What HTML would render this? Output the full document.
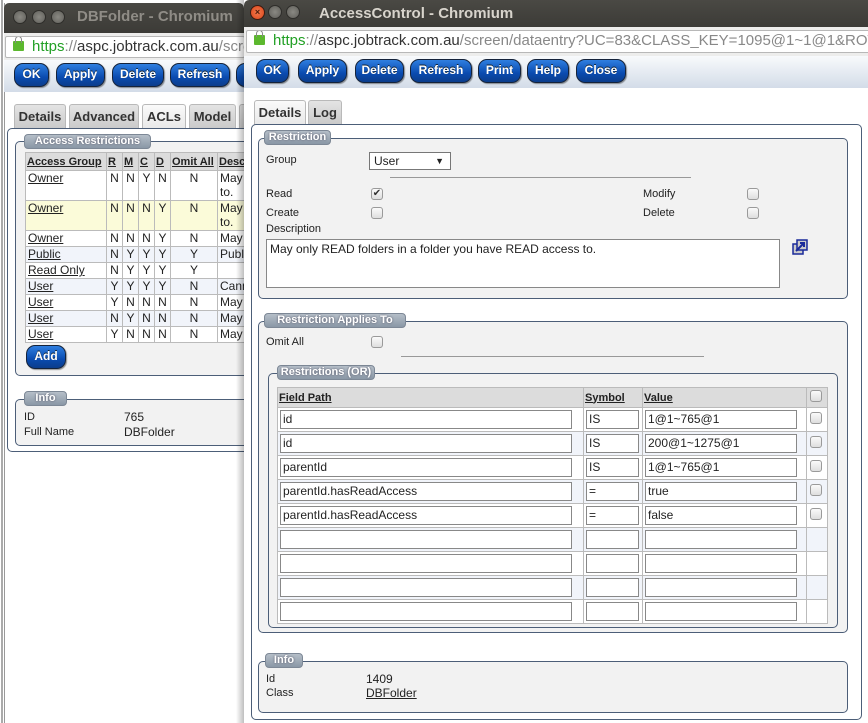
<!DOCTYPE html>
<html><head><meta charset="utf-8"><style>
*{box-sizing:border-box;margin:0;padding:0}
body{width:868px;height:723px;overflow:hidden;background:#fff;font-family:"Liberation Sans",sans-serif;position:relative;color:#222}
.a{position:absolute}
.tb{background:linear-gradient(#4a4944,#3c3b37);}
.ttl{color:#d8d4cc;font-weight:bold;font-size:15px;font-family:"Liberation Sans",sans-serif;}
.wb{width:14px;height:14px;border-radius:50%;background:radial-gradient(#8a8983,#5f5e59);border:1px solid #2e2d2a}
.url{background:#fff;border:1px solid #b8b8b8;border-radius:2px;font-size:15px;font-family:"Liberation Sans",sans-serif;color:#888;white-space:nowrap;overflow:hidden;padding-left:26px;line-height:20px}
.url b{font-weight:normal;color:#22a025}.url i{font-style:normal;color:#333}
.lock{position:absolute;left:7px;top:4px;width:11px;height:10px;background:#5cb82e;border-radius:1px}
.lock:before{content:"";position:absolute;left:2px;top:-5px;width:5px;height:6px;border:1.5px solid #888;border-bottom:none;border-radius:4px 4px 0 0}
.tool{background:linear-gradient(#f8fafc,#d3dce8)}
.btn{position:absolute;height:24px;border-radius:9px;background:linear-gradient(#2f7fe0,#0a4bb0 60%,#0b3d8c);border:1.5px solid #15233a;color:#fff;font-weight:bold;font-size:12px;text-align:center;line-height:21px;box-shadow:1px 1px 1px rgba(0,0,0,.4);text-shadow:0 -1px 0 #123}
.tab{position:absolute;height:25px;border:1px solid #b9b9b9;border-bottom:none;border-radius:3px 3px 0 0;background:linear-gradient(#e4e4e4,#c9c9c9);font-weight:bold;font-size:13px;color:#333;text-align:center;line-height:24px}
.tab.on{background:linear-gradient(#fafafa,#e8e8e8)}
.fs{position:absolute;border:1px solid #4c5e78;border-radius:5px;background:#f2f2f2}
.lg{position:absolute;height:15px;border-radius:4px;background:linear-gradient(#b5bec8,#8a97a6);border:1px solid #7d8896;color:#fff;font-weight:bold;font-size:11px;text-align:center;line-height:13px;text-shadow:0 0 2px #556}
.l{position:absolute;font-size:11px;color:#222}
.cb{position:absolute;width:12px;height:12px;border:1px solid #9a9a9a;border-radius:3px;background:linear-gradient(#fafafa,#dedede)}
table{border-collapse:collapse;position:absolute;font-size:12px}
td,th{border:1px solid #bbb}
th{background:#dcdcdc;text-align:left;font-size:11px;text-decoration:underline;padding:0 1px}
.lt td{padding:0 2px;vertical-align:top;height:16px;line-height:14px}
.lt td.c{text-align:center}
.u{text-decoration:underline}
.inp{position:absolute;height:19px;border:1px solid #888;background:#fff;font-size:12px;padding-left:2px;line-height:17px}
</style></head><body>

<div class="a" style="left:1px;top:0;width:2px;height:723px;background:#aaa"></div>

<!-- LEFT WINDOW -->
<div class="a" style="left:4px;top:3px;width:240px;height:720px;background:#fff;border-left:1px solid #999"></div>
<div class="a tb" style="left:4px;top:3px;width:240px;height:30px;border-radius:5px 5px 0 0"></div>
<div class="a wb" style="left:13px;top:10px"></div>
<div class="a wb" style="left:32px;top:10px"></div>
<div class="a wb" style="left:51px;top:10px"></div>
<div class="a ttl" style="left:77px;top:8px;color:#8f8c86">DBFolder - Chromium</div>
<div class="a" style="left:4px;top:33px;width:240px;height:27px;background:#ededec"></div>
<div class="a url" style="left:5px;top:36px;width:240px;height:22px"><span class="lock"></span><b>https</b>://<i>aspc.jobtrack.com.au</i>/screen</div>
<div class="a tool" style="left:4px;top:60px;width:240px;height:32px"></div>
<div class="btn" style="left:14px;top:63px;width:35px">OK</div>
<div class="btn" style="left:56px;top:63px;width:49px">Apply</div>
<div class="btn" style="left:112px;top:63px;width:52px">Delete</div>
<div class="btn" style="left:170px;top:63px;width:60px">Refresh</div>
<div class="btn" style="left:236px;top:63px;width:30px"></div>
<div class="tab" style="left:14px;top:104px;width:52px">Details</div>
<div class="tab" style="left:69px;top:104px;width:70px">Advanced</div>
<div class="tab on" style="left:142px;top:104px;width:44px">ACLs</div>
<div class="tab" style="left:189px;top:104px;width:47px">Model</div>
<div class="tab" style="left:239px;top:104px;width:20px"></div>
<div class="fs" style="left:7px;top:128px;width:250px;height:324px;background:#fff"></div>
<div class="fs" style="left:15px;top:141px;width:240px;height:235px"></div>
<div class="lg" style="left:24px;top:134px;width:127px">Access Restrictions</div>
<table class="lt" style="left:25px;top:152px;width:235px;background:#fff">
<tr><th style="width:81px;height:18px">Access Group</th><th style="width:16px">R</th><th style="width:16px">M</th><th style="width:16px">C</th><th style="width:16px">D</th><th style="width:47px">Omit All</th><th>Desc</th></tr>
<tr style="height:30px"><td class="u">Owner</td><td class="c">N</td><td class="c">N</td><td class="c">Y</td><td class="c">N</td><td class="c">N</td><td>May to.</td></tr>
<tr style="height:30px;background:#fbfbd9"><td class="u">Owner</td><td class="c">N</td><td class="c">N</td><td class="c">N</td><td class="c">Y</td><td class="c">N</td><td>May to.</td></tr>
<tr><td class="u">Owner</td><td class="c">N</td><td class="c">N</td><td class="c">N</td><td class="c">Y</td><td class="c">N</td><td>May</td></tr>
<tr style="background:#f1f4fa"><td class="u">Public</td><td class="c">N</td><td class="c">Y</td><td class="c">Y</td><td class="c">Y</td><td class="c">Y</td><td>Publ</td></tr>
<tr><td class="u">Read Only</td><td class="c">N</td><td class="c">Y</td><td class="c">Y</td><td class="c">Y</td><td class="c">Y</td><td></td></tr>
<tr style="background:#f1f4fa"><td class="u">User</td><td class="c">Y</td><td class="c">Y</td><td class="c">Y</td><td class="c">Y</td><td class="c">N</td><td>Cann</td></tr>
<tr><td class="u">User</td><td class="c">Y</td><td class="c">N</td><td class="c">N</td><td class="c">N</td><td class="c">N</td><td>May</td></tr>
<tr style="background:#f1f4fa"><td class="u">User</td><td class="c">N</td><td class="c">Y</td><td class="c">N</td><td class="c">N</td><td class="c">N</td><td>May</td></tr>
<tr><td class="u">User</td><td class="c">Y</td><td class="c">N</td><td class="c">N</td><td class="c">N</td><td class="c">N</td><td>May</td></tr>
</table>
<div class="btn" style="left:26px;top:345px;width:40px">Add</div>
<div class="fs" style="left:15px;top:399px;width:240px;height:47px"></div>
<div class="lg" style="left:24px;top:391px;width:43px">Info</div>
<div class="l" style="left:24px;top:411px">ID</div>
<div class="a" style="left:124px;top:410px;font-size:12px">765</div>
<div class="l" style="left:24px;top:426px">Full Name</div>
<div class="a" style="left:124px;top:425px;font-size:12px">DBFolder</div>

<!-- RIGHT WINDOW -->
<div class="a" style="left:236px;top:0;width:8px;height:723px;background:linear-gradient(90deg,rgba(0,0,0,0),rgba(0,0,0,.25))"></div>
<div class="a" style="left:244px;top:0;width:624px;height:723px;background:#fff"></div>
<div class="a tb" style="left:244px;top:0;width:624px;height:27px;border-radius:5px 0 0 0"></div>
<div class="a" style="left:250px;top:5px;width:15px;height:15px;border-radius:50%;background:radial-gradient(#f47a4d,#d9451a);border:1px solid #3a1a10;color:#4a1a0a;font-size:9px;text-align:center;line-height:13px;font-weight:bold">×</div>
<div class="a wb" style="left:268px;top:5px"></div>
<div class="a wb" style="left:286px;top:5px"></div>
<div class="a ttl" style="left:319px;top:5px">AccessControl - Chromium</div>
<div class="a" style="left:244px;top:27px;width:624px;height:29px;background:#ededec"></div>
<div class="a url" style="left:246px;top:30px;width:630px;height:23px"><span class="lock"></span><b>https</b>://<i>aspc.jobtrack.com.au</i>/screen/dataentry?UC=83&amp;CLASS_KEY=1095@1~1@1&amp;ROW</div>
<div class="a tool" style="left:244px;top:56px;width:624px;height:32px"></div>
<div class="btn" style="left:256px;top:59px;width:33px">OK</div>
<div class="btn" style="left:298px;top:59px;width:49px">Apply</div>
<div class="btn" style="left:355px;top:59px;width:49px">Delete</div>
<div class="btn" style="left:410px;top:59px;width:62px">Refresh</div>
<div class="btn" style="left:478px;top:59px;width:43px">Print</div>
<div class="btn" style="left:527px;top:59px;width:42px">Help</div>
<div class="btn" style="left:576px;top:59px;width:50px">Close</div>

<div class="tab on" style="left:254px;top:100px;width:52px">Details</div>
<div class="tab" style="left:308px;top:100px;width:34px">Log</div>
<div class="fs" style="left:251px;top:124px;width:611px;height:596px;background:#fff"></div>

<div class="fs" style="left:258px;top:138px;width:590px;height:161px"></div>
<div class="lg" style="left:264px;top:130px;width:67px">Restriction</div>
<div class="l" style="left:266px;top:154px">Group</div>
<div class="a" style="left:369px;top:152px;width:82px;height:18px;border:1px solid #777;background:#fff;font-size:12px;padding-left:4px;line-height:16px">User<span style="position:absolute;right:6px;font-size:9px">▼</span></div>
<div class="a" style="left:390px;top:177px;width:301px;height:1px;background:#999"></div>
<div class="l" style="left:266px;top:188px">Read</div>
<div class="cb" style="left:371px;top:188px;font-size:10px;line-height:10px;text-align:center;color:#333">✔</div>
<div class="l" style="left:643px;top:188px">Modify</div>
<div class="cb" style="left:747px;top:188px"></div>
<div class="l" style="left:266px;top:207px">Create</div>
<div class="cb" style="left:371px;top:207px"></div>
<div class="l" style="left:643px;top:207px">Delete</div>
<div class="cb" style="left:747px;top:207px"></div>
<div class="l" style="left:266px;top:223px">Description</div>
<div class="a" style="left:266px;top:239px;width:514px;height:49px;border:1px solid #888;background:#fff;font-size:12px;padding:2px 3px">May only READ folders in a folder you have READ access to.</div>
<svg class="a" style="left:792px;top:239px" width="16" height="16" viewBox="0 0 16 16"><rect x="1" y="5" width="10" height="10" fill="#ccc" stroke="#1a2a9a" stroke-width="1.5"/><rect x="5" y="1" width="10" height="10" fill="#ccc" stroke="#1a2a9a" stroke-width="1.5"/><path d="M4 12 L12 4 M8 4 H12 V8" stroke="#1a2a9a" stroke-width="2" fill="none"/></svg>

<div class="fs" style="left:258px;top:321px;width:590px;height:312px"></div>
<div class="lg" style="left:264px;top:313px;width:142px">Restriction Applies To</div>
<div class="l" style="left:266px;top:336px">Omit All</div>
<div class="cb" style="left:371px;top:336px"></div>
<div class="a" style="left:401px;top:356px;width:303px;height:1px;background:#999"></div>

<div class="fs" style="left:268px;top:373px;width:570px;height:255px"></div>
<div class="lg" style="left:277px;top:365px;width:98px">Restrictions (OR)</div>
<table style="left:277px;top:387px;width:551px;background:#fff">
<tr style="height:20px"><th style="width:306px">Field Path</th><th style="width:59px">Symbol</th><th style="width:164px">Value</th><th style="background:#dcdcdc"></th></tr>
<tr style="height:24px"><td></td><td></td><td></td><td></td></tr>
<tr style="height:24px;background:#f1f4fa"><td></td><td></td><td></td><td></td></tr>
<tr style="height:24px"><td></td><td></td><td></td><td></td></tr>
<tr style="height:24px;background:#f1f4fa"><td></td><td></td><td></td><td></td></tr>
<tr style="height:24px"><td></td><td></td><td></td><td></td></tr>
<tr style="height:24px;background:#f1f4fa"><td></td><td></td><td></td><td></td></tr>
<tr style="height:24px"><td></td><td></td><td></td><td></td></tr>
<tr style="height:24px;background:#f1f4fa"><td></td><td></td><td></td><td></td></tr>
<tr style="height:24px"><td></td><td></td><td></td><td></td></tr>
</table>
<div class="cb" style="left:810px;top:390px"></div>

<div class="inp" style="left:280px;top:410px;width:292px">id</div><div class="inp" style="left:586px;top:410px;width:53px">IS</div><div class="inp" style="left:645px;top:410px;width:152px">1@1~765@1</div><div class="cb" style="left:810px;top:412px"></div>
<div class="inp" style="left:280px;top:434px;width:292px">id</div><div class="inp" style="left:586px;top:434px;width:53px">IS</div><div class="inp" style="left:645px;top:434px;width:152px">200@1~1275@1</div><div class="cb" style="left:810px;top:436px"></div>
<div class="inp" style="left:280px;top:458px;width:292px">parentId</div><div class="inp" style="left:586px;top:458px;width:53px">IS</div><div class="inp" style="left:645px;top:458px;width:152px">1@1~765@1</div><div class="cb" style="left:810px;top:460px"></div>
<div class="inp" style="left:280px;top:482px;width:292px">parentId.hasReadAccess</div><div class="inp" style="left:586px;top:482px;width:53px">=</div><div class="inp" style="left:645px;top:482px;width:152px">true</div><div class="cb" style="left:810px;top:484px"></div>
<div class="inp" style="left:280px;top:506px;width:292px">parentId.hasReadAccess</div><div class="inp" style="left:586px;top:506px;width:53px">=</div><div class="inp" style="left:645px;top:506px;width:152px">false</div><div class="cb" style="left:810px;top:508px"></div>
<div class="inp" style="left:280px;top:530px;width:292px"></div><div class="inp" style="left:586px;top:530px;width:53px"></div><div class="inp" style="left:645px;top:530px;width:152px"></div>
<div class="inp" style="left:280px;top:554px;width:292px"></div><div class="inp" style="left:586px;top:554px;width:53px"></div><div class="inp" style="left:645px;top:554px;width:152px"></div>
<div class="inp" style="left:280px;top:578px;width:292px"></div><div class="inp" style="left:586px;top:578px;width:53px"></div><div class="inp" style="left:645px;top:578px;width:152px"></div>
<div class="inp" style="left:280px;top:602px;width:292px"></div><div class="inp" style="left:586px;top:602px;width:53px"></div><div class="inp" style="left:645px;top:602px;width:152px"></div>

<div class="fs" style="left:258px;top:661px;width:590px;height:52px"></div>
<div class="lg" style="left:265px;top:653px;width:38px">Info</div>
<div class="l" style="left:266px;top:673px">Id</div>
<div class="a" style="left:366px;top:672px;font-size:12px">1409</div>
<div class="l" style="left:266px;top:687px">Class</div>
<div class="a u" style="left:366px;top:686px;font-size:12px">DBFolder</div>
</body></html>
